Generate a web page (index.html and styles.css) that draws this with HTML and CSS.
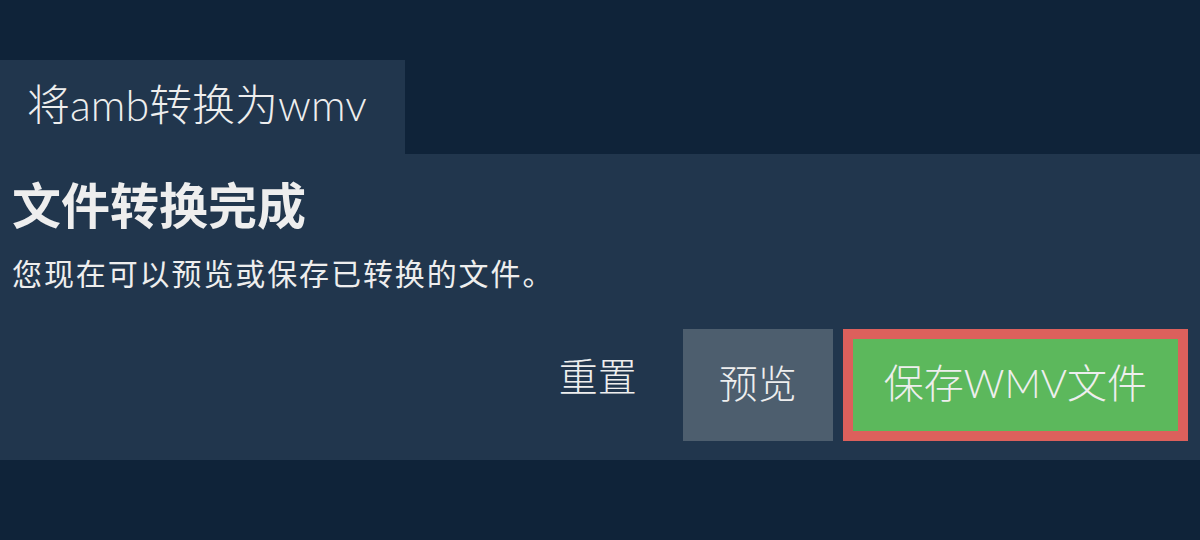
FILE: index.html
```html
<!DOCTYPE html>
<html lang="zh">
  <head>
    <meta charset="UTF-8" />
    <meta name="viewport" content="width=device-width, initial-scale=1.0" />
    <title>将amb转换为wmv</title>
    <link rel="stylesheet" href="styles.css">
  </head>
  <body>
    <div class="tabs">
      <div class="tab">将amb转换为wmv</div>
    </div>
    <div class="panel">
      <h2 class="title">文件转换完成</h2>
      <p class="desc">您现在可以预览或保存已转换的文件。</p>
      <div class="actions">
        <button class="btn btn-reset">重置</button>
        <button class="btn btn-preview">预览</button>
        <button class="btn btn-save">保存WMV文件</button>
      </div>
    </div>
  </body>
</html>
```

FILE: styles.css
```css
body {
  margin: 0;
  padding: 0;
  background: #0f2339;
  color: #eeeeee;
  font-family: "Lato", "Noto Sans CJK SC", sans-serif;
}

.tabs {
  padding-top: 60px;
  display: flex;
}

.tab {
  background: #21364d;
  height: 84px;
  padding: 0 38px 10px 27px;
  display: flex;
  align-items: center;
  font-size: 43px;
  font-weight: 300;
  color: #eeeeee;
}

.panel {
  background: #21364d;
  padding: 22px 12px 19px 12px;
}

.title {
  margin: 0;
  font-size: 49px;
  line-height: 58px;
  font-weight: bold;
}

.desc {
  margin: 19px 0 0 0;
  font-size: 30px;
  line-height: 40px;
  letter-spacing: 1.9px;
}

.actions {
  margin-top: 36px;
  display: flex;
  justify-content: flex-end;
  gap: 10px;
}

.btn {
  height: 112px;
  padding: 0 36px 8px 36px;
  border: none;
  font-family: "Lato", "Noto Sans CJK SC", sans-serif;
  font-size: 39px;
  font-weight: 300;
  color: #eeeeee;
  background: transparent;
  cursor: pointer;
}

.btn-reset {
  padding-bottom: 22px;
}

.btn-preview {
  background: #4d5e6e;
}

.btn-save {
  background: #5cb85c;
  border: 10px solid #dc605c;
  padding: 0 31px 8px 31px;
  font-size: 40px;
}
```
